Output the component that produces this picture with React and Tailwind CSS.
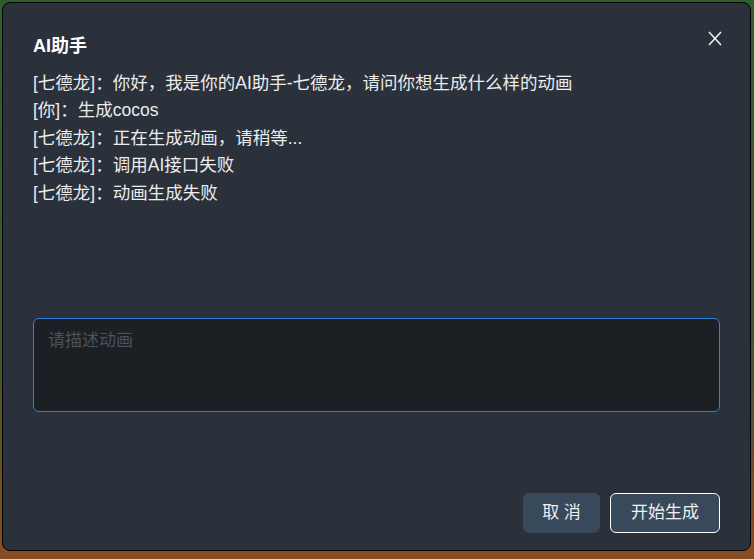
const messages = [
  "[七德龙]：你好，我是你的AI助手-七德龙，请问你想生成什么样的动画",
  "[你]：生成cocos",
  "[七德龙]：正在生成动画，请稍等...",
  "[七德龙]：调用AI接口失败",
  "[七德龙]：动画生成失败",
];

function CloseIcon() {
  return (
    <svg width="14" height="15" viewBox="0 0 14 15" fill="none">
      <path d="M1 1L13 14M13 1L1 14" stroke="#f4f4f4" strokeWidth="1.5" />
    </svg>
  );
}

const App = () => {
  return (
    <div
      className="h-[559px] w-[754px] p-[2px] pb-[8px] bg-[linear-gradient(180deg,#2f5e2c_0%,#3a5a2a_60%,#8a4c22_100%)]"
      style={{ fontFamily: '"Liberation Sans", "Noto Sans CJK SC", sans-serif' }}
    >
      <div className="relative flex flex-col h-full w-[749px] rounded-lg border border-black bg-[#2a313b] px-[30px] pt-[30px] pb-[17px]">
        <div className="text-[18px] font-bold text-white leading-[26px]">AI助手</div>
        <button className="absolute right-[28px] top-[28px] p-0">
          <CloseIcon />
        </button>
        <div className="mt-[11px] flex flex-col text-[17.5px] leading-[27.4px] text-[#ececec]">
          {messages.map((m, i) => (
            <div key={i}>{m}</div>
          ))}
        </div>
        <textarea
          className="mt-[111px] h-[94px] w-full resize-none rounded-md border border-[#2f7fe6] bg-[#1c2025] px-[14px] py-[9px] text-[17px] text-[#ececec] outline-none placeholder:text-[#4a525c]"
          placeholder="请描述动画"
        />
        <div className="mt-auto flex flex-row justify-end gap-[10px]">
          <button className="h-[40px] w-[77px] rounded-md bg-[#38495b] text-[17px] text-[#f0f0f0]">
            取 消
          </button>
          <button className="h-[40px] w-[110px] rounded-md border border-white bg-[#38495b] text-[17px] text-[#f0f0f0]">
            开始生成
          </button>
        </div>
      </div>
    </div>
  );
};

export default App;
